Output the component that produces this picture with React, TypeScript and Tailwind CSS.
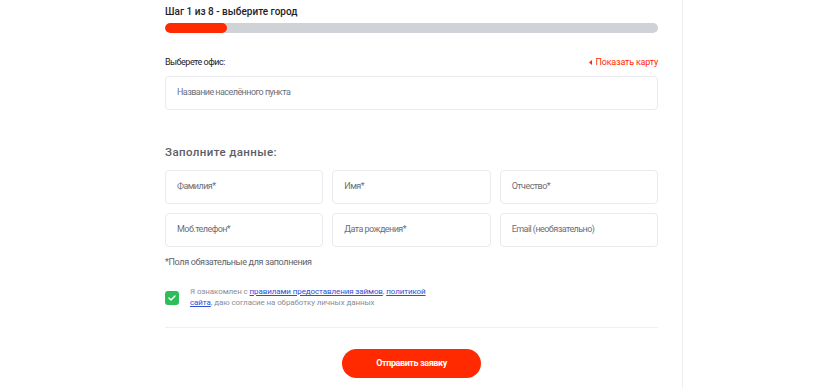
import React from "react";

function Field({ label }: { label: string }) {
  return (
    <div className="h-[34px] rounded-[4px] border border-[#e9eaee] flex items-center px-[11px] text-[9px] tracking-[-0.55px] text-[#6b6f7a]">
      {label}
    </div>
  );
}

export default function App() {
  return (
    <div
      className="w-[825px] h-[388px] bg-white flex overflow-hidden"
      style={{ fontFamily: "Roboto, 'Noto Sans', sans-serif" }}
    >
      <div className="w-[682px] shrink-0 pl-[165px] pr-[24px]">
        <div className="pt-[5px] text-[10px] font-medium text-[#1f2126] leading-[14px]">
          Шаг 1 из 8 - выберите город
        </div>
        <div className="mt-[4px] h-[10px] rounded-full bg-[#cfd2d6] overflow-hidden">
          <div className="h-full w-[62px] rounded-full bg-[#ff2a00]" />
        </div>
        <div className="mt-[23px] flex items-center justify-between leading-[12px]">
          <span className="text-[9px] tracking-[-0.5px] text-[#1f2126]">Выберете офис:</span>
          <span className="text-[9px] tracking-[-0.2px] text-[#ff2a00] flex items-center gap-[4px]">
            <svg width="3" height="5" viewBox="0 0 3 5">
              <path d="M3 0 L0 2.5 L3 5 Z" fill="#ff2a00" />
            </svg>
            Показать карту
          </span>
        </div>
        <div className="mt-[8px]">
          <Field label="Название населённого пункта" />
        </div>
        <div className="mt-[35px] text-[11.5px] font-medium tracking-[0.4px] text-[#5a5d66] leading-[14px]">
          Заполните данные:
        </div>
        <div className="mt-[11px] grid grid-cols-3 gap-x-[9px] gap-y-[9px]">
          <Field label="Фамилия*" />
          <Field label="Имя*" />
          <Field label="Отчество*" />
          <Field label="Моб.телефон*" />
          <Field label="Дата рождения*" />
          <Field label="Email (необязательно)" />
        </div>
        <div className="mt-[9px] text-[9px] tracking-[-0.35px] text-[#5f636d] leading-[12px]">
          *Поля обязательные для заполнения
        </div>
        <div className="mt-[18px] flex items-start gap-[11px]">
          <div className="mt-[5px] w-[14px] h-[14px] rounded-[3px] bg-[#2dbe5a] flex items-center justify-center shrink-0">
            <svg width="8" height="6" viewBox="0 0 8 6">
              <path d="M1 3 L3 5 L7 1" stroke="white" strokeWidth="1.4" fill="none" strokeLinecap="round" strokeLinejoin="round" />
            </svg>
          </div>
          <div className="text-[8px] leading-[11px] tracking-[-0.1px] text-[#8a8d95]">
            <div>
              Я ознакомлен с{" "}
              <span className="text-[#2e4fd6] underline">правилами предоставления займов</span>,{" "}
              <span className="text-[#2e4fd6] underline">политикой</span>
            </div>
            <div>
              <span className="text-[#2e4fd6] underline">сайта</span>, даю согласие на обработку личных данных
            </div>
          </div>
        </div>
        <div className="mt-[19px] h-px bg-[#f0f0f3]" />
        <div className="mt-[21px] flex justify-center">
          <div className="w-[139px] h-[29px] rounded-full bg-[#ff2a00] text-white text-[9px] font-bold tracking-[-0.4px] flex items-center justify-center">
            Отправить заявку
          </div>
        </div>
      </div>
      <div className="flex-1 border-l border-[#eeeef3]" />
    </div>
  );
}
